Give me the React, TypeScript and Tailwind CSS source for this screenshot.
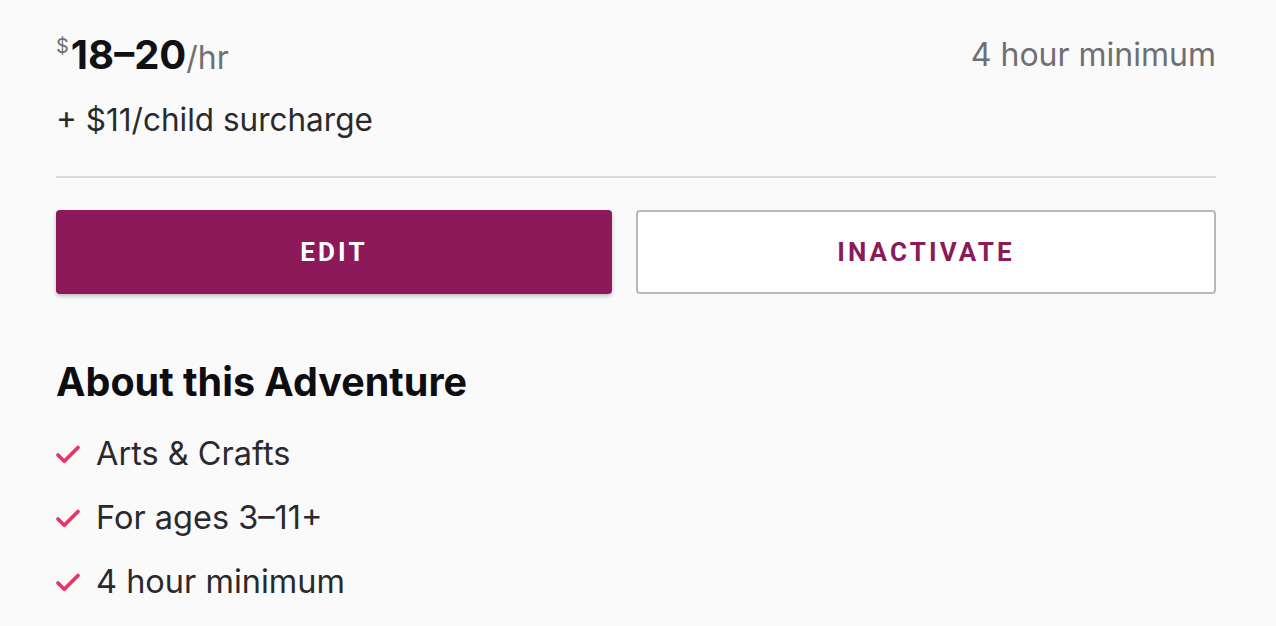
import { Check } from 'lucide-react';

const features = ['Arts & Crafts', 'For ages 3–11+', '4 hour minimum'];

export default function App() {
  return (
    <div className="min-h-screen bg-[#fafafa] pl-14 pr-[60px] pt-[26px] font-['Inter',sans-serif]">
      {/* Rate */}
      <div className="flex items-start justify-between">
        <div className="flex items-baseline">
          <span className="self-start text-[20px] leading-none text-[#6f6f73] mt-[10px] mr-[2px]">$</span>
          <span className="text-[40px] font-bold leading-[58px] text-[#111114]">18–20</span>
          <span className="text-[32px] leading-[58px] text-[#6f6f73]">/hr</span>
        </div>
        <span className="text-[32px] leading-[58px] text-[#6f6f73]">4 hour minimum</span>
      </div>
      <p className="mt-[13px] text-[31.5px] leading-[40px] text-[#2a2a2e]">+ $11/child surcharge</p>

      <div className="mt-[36px] h-[2px] bg-[#dadada]" />

      {/* Actions */}
      <div className="mt-[32px] flex gap-6">
        <button className="h-[84px] w-[556px] rounded-[4px] bg-[#8c1959] font-['Roboto',sans-serif] text-[26px] font-bold tracking-[0.12em] text-white shadow-[0_2px_4px_rgba(0,0,0,0.25)]">
          EDIT
        </button>
        <button className="h-[84px] flex-1 rounded-[4px] border-2 border-[#b8b8b8] bg-white font-['Roboto',sans-serif] text-[26px] font-bold tracking-[0.12em] text-[#8c1959]">
          INACTIVATE
        </button>
      </div>

      {/* About */}
      <h2 className="mt-[64px] text-[39.5px] font-bold leading-[48px] text-[#0d0d12]">About this Adventure</h2>
      <ul className="mt-[27px] flex flex-col gap-[22px]">
        {features.map((f) => (
          <li key={f} className="flex items-center gap-[13px] text-[32.5px] leading-[42px] text-[#2a2a2e]">
            <Check size={30} strokeWidth={3} className="text-[#e8336b] -ml-[3px] mt-[2px]" />
            {f}
          </li>
        ))}
      </ul>
    </div>
  );
}
